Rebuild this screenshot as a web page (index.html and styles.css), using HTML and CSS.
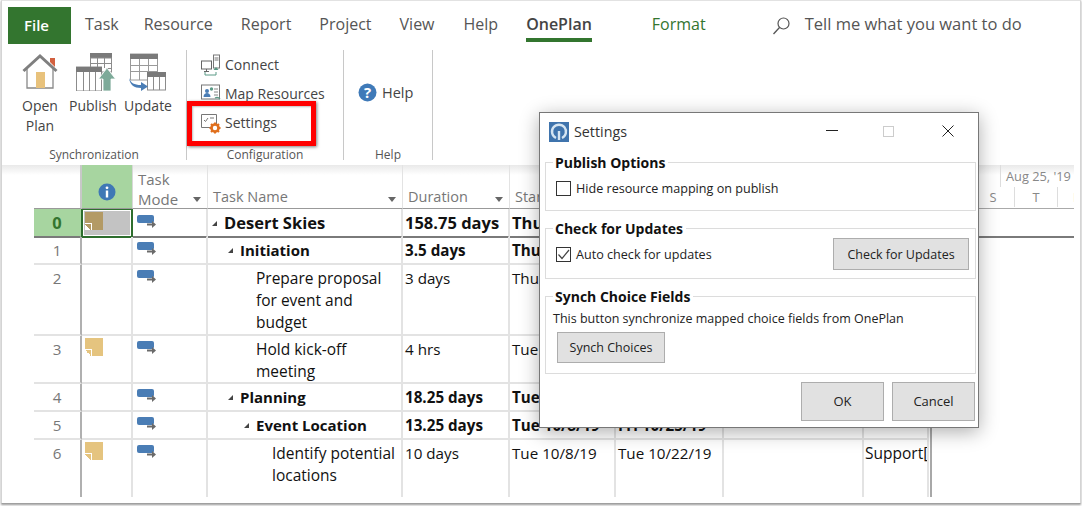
FILE: index.html
```html
<!DOCTYPE html>
<html lang="en">
<head>
<meta charset="utf-8">
<title>OnePlan Settings</title>
<link rel="stylesheet" href="styles.css">
</head>
<body>
<svg class="defs" width="0" height="0"><symbol id="mode" viewBox="0 0 20 14"><rect x="0" y="0" width="17" height="8" rx="2" fill="#4a7db5"/><path d="M10 9.500h6" stroke="#6a6a6a" stroke-width="2" fill="none"/><path d="M15 6 19 9.500 15 13z" fill="#6a6a6a"/></symbol></svg>
<div class="window">
  <nav class="tabs">
    <span class="tab file">File</span>
    <span class="tab t-task">Task</span>
    <span class="tab t-res">Resource</span>
    <span class="tab t-rep">Report</span>
    <span class="tab t-proj">Project</span>
    <span class="tab t-view">View</span>
    <span class="tab t-help">Help</span>
    <span class="tab t-one">OnePlan</span>
    <span class="tab t-format">Format</span>
    <span class="tell">
      <svg class="search" width="20" height="20" viewBox="0 0 20 20"><circle cx="11.500" cy="7.500" r="5.500" fill="none" stroke="#555" stroke-width="1.200"/><path d="M7.500 11.500 1.500 18" stroke="#555" stroke-width="1.300" fill="none"/></svg>
      Tell me what you want to do
    </span>
  </nav>
  <section class="ribbon">
    <div class="group g-sync">
      <div class="group-body big-row">
        <div class="big b-open">
          <svg width="36" height="36" viewBox="0 0 36 36"><path d="M28 5h5v9l-5-5z" fill="#d2603f"/><path d="M5 16v19h26V16" fill="#fff" stroke="#888" stroke-width="1.300"/><path d="M14 19h9v16h-9z" fill="#e8c27c"/><path d="M1.500 18 18 3l16.500 15" fill="none" stroke="#7f7f7f" stroke-width="3"/></svg>
          <span>Open<br>Plan</span>
        </div>
        <div class="big b-pub">
          <svg width="40" height="38" viewBox="0 0 40 38"><path d="M14 0h22v5H14z" fill="#7a7a7a"/><rect x="14.500" y="5" width="21" height="14" fill="#fff" stroke="#8c8c8c"/><path d="M21.500 5v10M28.500 5v10M14 10.500h22M30 15.500h6" stroke="#8c8c8c" fill="none"/><rect x=".5" y="14" width="25" height="24" fill="#fff" stroke="#8c8c8c"/><path d="M0 14h26v5H0z" fill="#7a7a7a"/><path d="M7.500 19v19M13.500 19v19M19.500 19v19" stroke="#8c8c8c"/><path d="M31 15 39.500 26H35V38H27V26H22.500z" fill="#7daa99" stroke="#fff" stroke-width=".8"/></svg>
          <span>Publish</span>
        </div>
        <div class="big b-upd">
          <svg width="38" height="38" viewBox="0 0 38 38"><rect x="1.500" y="1" width="27" height="26" fill="#fff" stroke="#9a9a9a"/><path d="M1 1h28v5H1z" fill="#7a7a7a"/><path d="M1 12.500h28M1 18.500h28M10.500 6v21M19.500 6v21" stroke="#9a9a9a"/><rect x="18.500" y="20" width="18" height="17" fill="#fff" stroke="#8c8c8c"/><path d="M18 19h19v5H18z" fill="#7a7a7a"/><path d="M24.500 24v13M30.500 24v13" stroke="#8c8c8c"/><path d="M0 25c2 5 5 7 12 7v-3l7 4.500-7 4.500v-3C5 35 1 32 0 25z" fill="#4a7db5"/></svg>
          <span>Update</span>
        </div>
      </div>
      <div class="group-label">Synchronization</div>
    </div>
    <div class="group g-conf">
      <div class="group-body small-col">
        <div class="small">
          <svg width="22" height="22" viewBox="0 0 22 22"><rect x="1.500" y="7" width="10" height="8" fill="#fff" stroke="#666"/><path d="M4 17.500h5M6.500 15v2.500" stroke="#666"/><rect x="13.500" y="1" width="6" height="13" fill="#fff" stroke="#777"/><path d="M14.500 4h4M14.500 6h4" stroke="#777"/><path d="M5 18v3h11v-3" fill="none" stroke="#5b9a86"/><path d="M16 13l-2.500 3h5z" fill="#5b9a86"/></svg>
          <span>Connect</span>
        </div>
        <div class="small">
          <svg width="22" height="22" viewBox="0 0 22 22"><rect x="1.500" y="2" width="18" height="14" fill="#fff" stroke="#777"/><circle cx="7" cy="8" r="2" fill="#4a7db5"/><path d="M3.500 14c0-3 2-4 3.500-4s3.500 1 3.500 4z" fill="#4a7db5"/><circle cx="11.500" cy="6" r="1.700" fill="#5b9a86"/><path d="M14 6h4M14 9h4M14 12h4" stroke="#888"/><path d="M15 15a4 4 0 0 1 5 1M20 19a4 4 0 0 1-5 1" stroke="#5b9a86" fill="none" stroke-width="1.300"/></svg>
          <span>Map Resources</span>
        </div>
        <div class="small">
          <svg width="22" height="22" viewBox="0 0 22 22"><path d="M1.500 2.500h15v13h-15z" fill="#fff" stroke="#777"/><path d="M4 8l1.500 1.500L8 6M10 6h4" stroke="#777" fill="none"/><circle cx="15" cy="16" r="3.500" fill="#fff" stroke="#e0701e" stroke-width="2.600"/><path d="M15 10.500v2M15 19.500v2M9.500 16h2M18.500 16h2M11 12l1.500 1.500M17.500 18.500 19 20M19 12l-1.500 1.500M12.500 18.500 11 20" stroke="#e0701e" stroke-width="2"/></svg>
          <span>Settings</span>
        </div>
      </div>
      <div class="group-label">Configuration</div>
    </div>
    <div class="group g-help">
      <div class="group-body help-body">
        <svg width="19" height="19" viewBox="0 0 19 19"><circle cx="9.500" cy="9.500" r="9" fill="#3f7ab8"/><text x="9.500" y="14.500" text-anchor="middle" class="qmark">?</text></svg>
        <span>Help</span>
      </div>
      <div class="group-label">Help</div>
    </div>
  </section>
  <section class="sheet">
    <div class="row head">
      <div class="c corner"></div>
      <div class="c info"><svg width="18" height="18" viewBox="0 0 18 18"><circle cx="9" cy="9" r="8.500" fill="#3f78b5"/><path d="M7.800 7.500h2.400v7H7.800z" fill="#fff"/><circle cx="9" cy="4.800" r="1.400" fill="#fff"/></svg></div>
      <div class="c h-mode"><span>Task<br>Mode</span><i class="arrow"></i></div>
      <div class="c"><span>Task Name</span><i class="arrow"></i></div>
      <div class="c"><span>Duration</span><i class="arrow"></i></div>
      <div class="c"><span>Start</span><i class="arrow"></i></div>
      <div class="c"></div>
      <div class="c"></div>
      <div class="c"></div>
      <div class="c gutter"></div>
      <div class="gantt-head">
        <div class="week">Aug 25, '19</div>
        <div class="days"><span>S</span><span>T</span><span class="cut">F</span></div>
      </div>
    </div>
    <div class="row r0 summary">
      <div class="c num sel-num">0</div>
      <div class="c ind sel"><b class="note dark"></b></div>
      <div class="c mode"><svg class="m"><use href="#mode"/></svg></div>
      <div class="c name l1"><i class="tri"></i>Desert Skies</div>
      <div class="c">158.75 days</div>
      <div class="c">Thu</div>
      <div class="c"></div>
      <div class="c"></div>
      <div class="c"></div>
      <div class="c gutter"></div>
      <div class="c gantt-cell"></div>
    </div>
    <div class="row r1 summary">
      <div class="c num">1</div>
      <div class="c ind"></div>
      <div class="c mode"><svg class="m"><use href="#mode"/></svg></div>
      <div class="c name l2"><i class="tri"></i>Initiation</div>
      <div class="c">3.5 days</div>
      <div class="c">Thu</div>
      <div class="c"></div>
      <div class="c"></div>
      <div class="c"></div>
      <div class="c gutter"></div>
    </div>
    <div class="row r2">
      <div class="c num">2</div>
      <div class="c ind"></div>
      <div class="c mode"><svg class="m"><use href="#mode"/></svg></div>
      <div class="c name l3">Prepare proposal<br>for event and<br>budget</div>
      <div class="c">3 days</div>
      <div class="c">Thu</div>
      <div class="c"></div>
      <div class="c"></div>
      <div class="c"></div>
      <div class="c gutter"></div>
    </div>
    <div class="row r3">
      <div class="c num">3</div>
      <div class="c ind"><b class="note"></b></div>
      <div class="c mode"><svg class="m"><use href="#mode"/></svg></div>
      <div class="c name l3">Hold kick-off<br>meeting</div>
      <div class="c">4 hrs</div>
      <div class="c">Tue</div>
      <div class="c"></div>
      <div class="c"></div>
      <div class="c"></div>
      <div class="c gutter"></div>
    </div>
    <div class="row r1 summary">
      <div class="c num">4</div>
      <div class="c ind"></div>
      <div class="c mode"><svg class="m"><use href="#mode"/></svg></div>
      <div class="c name l2"><i class="tri"></i>Planning</div>
      <div class="c">18.25 days</div>
      <div class="c">Tue</div>
      <div class="c"></div>
      <div class="c"></div>
      <div class="c"></div>
      <div class="c gutter"></div>
    </div>
    <div class="row r1 summary">
      <div class="c num">5</div>
      <div class="c ind"></div>
      <div class="c mode"><svg class="m"><use href="#mode"/></svg></div>
      <div class="c name l3"><i class="tri"></i>Event Location</div>
      <div class="c">13.25 days</div>
      <div class="c">Tue 10/8/19</div>
      <div class="c">Fri 10/25/19</div>
      <div class="c"></div>
      <div class="c"></div>
      <div class="c gutter"></div>
    </div>
    <div class="row r6">
      <div class="c num">6</div>
      <div class="c ind"><b class="note"></b></div>
      <div class="c mode"><svg class="m"><use href="#mode"/></svg></div>
      <div class="c name l4">Identify potential<br>locations</div>
      <div class="c">10 days</div>
      <div class="c">Tue 10/8/19</div>
      <div class="c">Tue 10/22/19</div>
      <div class="c"></div>
      <div class="c res">Support[</div>
      <div class="c gutter"></div>
    </div>
  </section>
</div>
<div class="highlight"></div>
<div class="dialog">
  <header class="dlg-title">
    <svg width="20" height="20" viewBox="0 0 20 20"><rect width="20" height="20" fill="#3f74ad"/><path d="M7 16a7 7 0 1 1 6 0" fill="none" stroke="#d5e5f2" stroke-width="2.400"/><path d="M10 9v9" stroke="#d5e5f2" stroke-width="2.400"/></svg>
    <span class="dlg-name">Settings</span>
    <span class="ctl min"></span>
    <span class="ctl max"></span>
    <svg class="close" width="12" height="12" viewBox="0 0 12 12"><path d="M.5.500l11 11M11.500.500l-11 11" stroke="#222" fill="none"/></svg>
  </header>
  <fieldset class="box b1">
    <legend>Publish Options</legend>
    <label class="check"><i class="cb"></i>Hide resource mapping on publish</label>
  </fieldset>
  <fieldset class="box b2">
    <legend>Check for Updates</legend>
    <label class="check"><i class="cb"><svg width="13" height="13" viewBox="0 0 13 13"><path d="M1.500 6.500 5 10.500 12 2" fill="none" stroke="#444" stroke-width="1.200"/></svg></i>Auto check for updates</label>
    <button class="btn b-check">Check for Updates</button>
  </fieldset>
  <fieldset class="box b3">
    <legend>Synch Choice Fields</legend>
    <p class="desc">This button synchronize mapped choice fields from OnePlan</p>
    <button class="btn b-synch">Synch Choices</button>
  </fieldset>
  <footer class="dlg-foot">
    <button class="btn b-foot">OK</button>
    <button class="btn b-foot">Cancel</button>
  </footer>
</div>
</body>
</html>
```
FILE: styles.css
```css
* { box-sizing: border-box; }
html, body { margin: 0; padding: 0; }
body {
  width: 1082px; height: 506px; overflow: hidden; background: #fff;
  font-family: "Open Sans", "Noto Sans", sans-serif; color: #222;
  position: relative;
}
.defs { position: absolute; }
.window {
  width: 1080px; height: 504px; margin-left: 1px;
  border: 1px solid #d4d4d4; border-bottom: 1px solid #a0a0a0; border-top-color: #e2e2e2;
  box-shadow: 0 1px 2px #999;
  background: #fff; overflow: hidden;
}
.tabs { display: flex; align-items: stretch; height: 47px; padding: 6px 0 0 6px; font-size: 16px; color: #555; }
.tab { display: block; padding-top: 5px; line-height: 24px; height: 31px; white-space: nowrap; }
.file { width: 63px; height: 37px; background: #33752f; color: #fff; text-align: center; padding: 6px 6px 0 0; font-weight: 600; font-size: 15px; }
.t-task { margin-left: 14px; }
.t-res { margin-left: 25px; }
.t-rep { margin-left: 28px; }
.t-proj { margin-left: 28px; }
.t-view { margin-left: 28px; }
.t-help { margin-left: 29px; }
.t-one { margin-left: 28px; font-weight: 600; color: #444; height: 35px; border-bottom: 4px solid #33752f; }
.t-format { margin-left: 60px; color: #33752f; }
.tell { margin-left: 66px; padding-top: 5px; line-height: 24px; display: flex; gap: 13px; color: #555; font-size: 16.500px; height: 31px; white-space: nowrap; }
.search { margin-top: 4px; }
.ribbon { display: flex; height: 117px; color: #444; font-size: 14px; }
.group { display: flex; flex-direction: column; border-right: 1px solid #c8c8c8; height: 110px; margin-top: 2px; }
.group-body { height: 96px; flex: none; }
.group-label { font-size: 12px; text-align: center; line-height: 18px; color: #555; flex: none; }
.g-sync { width: 185px; }
.g-conf { width: 157px; }
.g-help { width: 89px; }
.big-row { display: flex; padding: 3px 0 0 18px; }
.big { display: flex; flex-direction: column; align-items: center; text-align: center; line-height: 20px; font-size: 14px; }
.big svg { margin-bottom: 7px; flex: none; }
.b-pub svg, .b-upd svg { margin-bottom: 5px; }
.b-pub svg { margin-left: 6px; }
.b-open { width: 40px; }
.b-pub { width: 50px; margin-left: 8px; }
.b-upd { width: 50px; margin-left: 5px; }
.small-col { display: flex; flex-direction: column; padding: 0 0 0 13px; }
.small { display: flex; align-items: center; gap: 3px; height: 29px; font-size: 14px; white-space: nowrap; }
.help-body { display: flex; align-items: center; gap: 5px; padding: 0 0 0 14px; font-size: 14.500px; height: 84px; margin-bottom: 12px; }
.qmark { font: 700 15px "Open Sans", sans-serif; fill: #fff; }
.sheet { position: relative; background: linear-gradient(#e9e9e9 0, #fff 10px) no-repeat 0 0 / 1072px 12px; }
.row {
  display: grid;
  grid-template-columns: 48px 51px 75px 195px 107px 106px 108px 140px 65px 3px 142px;
  padding-left: 32px;
  font-size: 15.200px; color: #111;
}
.row .c { border-right: 2px solid #e3e3e3; border-bottom: 2px solid #e3e3e3; padding: 2px 0 0 2px; line-height: 22px; min-width: 0; overflow: hidden; white-space: nowrap; }
.row .gutter { border-right: 2px solid #a8a8a8; border-left: 0; border-bottom: 0; padding: 0; overflow: visible; }
.head { height: 44px; font-size: 14.500px; color: #777; position: relative; }
.head .c { border-bottom: 1px solid #999; position: relative; padding: 0 0 1px 5px; display: flex; align-items: flex-end; line-height: 20px; border-right-width: 1px; }
.head .h-mode { padding: 5px 0 0 5px; align-items: flex-start; font-size: 15px; line-height: 19.500px; }
.head .corner { border-right: 2px solid #c8c8c8; }
.head .info { background: #a7d5a0; padding: 0 0 7px; justify-content: center; border-right: 1px solid #d8d8d8; }
.arrow { position: absolute; right: 6px; bottom: 6px; border: 4.500px solid transparent; border-top: 5px solid #666; border-bottom: 0; }
.head .gutter { border-bottom: 1px solid #999; padding: 0; }
.gantt-head { height: 44px; width: 142px; font-size: 12.800px; color: #888; border-bottom: 1px solid #aaa; overflow: hidden; }
.week { margin-left: 68px; padding: 1px 0 0 5px; height: 22px; line-height: 20px; border-left: 1px solid #ddd; white-space: nowrap; }
.days { display: flex; padding-left: 40px; line-height: 20px; }
.days span { width: 43px; flex: none; text-align: center; border-right: 1px solid #ddd; height: 20px; }
.days .cut { border: 0; text-align: left; padding-left: 15px; }
.row .gantt-cell { border-right: 0; }
.row .num { text-align: center; color: #777; font-weight: 400; padding: 2px 0 0; border-right: 2px solid #b0b0b0; }
.row .mode { padding: 5px 0 0 4px; }
.r0 .c.mode { padding-top: 6px; }
.m { display: block; width: 20px; height: 14px; }
.note { display: block; width: 18px; height: 18px; background: #e5c47f; position: relative; margin: 0 0 0 1px; }
.note::after { content: ""; position: absolute; left: 0; bottom: 0; width: 6px; height: 6px; background: linear-gradient(45deg, #fff 50%, transparent 50%); border-top: 1px solid #fff; border-right: 1px solid #fff; }
.note.dark { background: #b39a65; margin: 0; }
.summary { font-weight: 700; }
.r0 { height: 28px; font-size: 16.500px; }
.r0 .c { border-bottom: 2px solid #7a7a7a; padding-top: 3px; }
.r1 { height: 28px; }
.r2 { height: 71px; }
.r3 { height: 48px; }
.r6 { height: 57px; }
.r6 .c { border-bottom: 0; }
.row .sel-num { background: #a7d5a0; color: #33752f; font-weight: 700; border-right-color: #a7d5a0; }
.row .sel { background: #c3c3c3; border: 2px solid #2e6e2e; box-shadow: inset 0 0 0 1px #fff; padding: 2px 0 0 2px; margin: -1px 0 0 -1px; height: 30px; }
.row .name { white-space: nowrap; position: relative; font-size: 15.500px; }
.summary .name { font-size: 15px; }
.r0.summary .name { font-size: 16.500px; }
.row .l1 { padding-left: 16px; }
.row .l2 { padding-left: 32px; }
.row .l3 { padding-left: 48px; }
.row .l4 { padding-left: 64px; }
.row .res { padding-left: 1px; font-size: 15.500px; }
.tri { position: absolute; margin-left: -12px; margin-top: 9px; border-style: solid; border-width: 0 0 5px 5px; border-color: transparent transparent #444 transparent; }
.highlight { position: absolute; left: 187px; top: 101px; width: 129px; height: 45px; border: 5px solid #f00; box-shadow: 1px 1px 3px rgba(0,0,0,.5), inset 1px 1px 2px rgba(0,0,0,.25); pointer-events: none; }
.dialog {
  position: absolute; left: 539px; top: 112px; width: 440px; height: 316px;
  background: #fff; border: 1px solid #777;
  box-shadow: 0 4px 18px rgba(0,0,0,.32);
  font-size: 12.600px; color: #222;
  padding: 0 2px 0 5px;
}
.dlg-title { display: flex; align-items: center; height: 36px; padding: 1px 0 0 4px; position: relative; }
.dlg-name { font-size: 14.300px; margin-left: 5px; color: #333; }
.ctl { position: absolute; }
.min { left: 281px; top: 17px; width: 12px; border-top: 1px solid #222; }
.max { left: 338px; top: 13px; width: 11px; height: 11px; border: 1px solid #ccc; }
.close { position: absolute; left: 397px; top: 12px; }
.box { position: relative; border: 1px solid #dcdcdc; margin: 0; padding: 0; min-width: 0; }
.box legend { position: absolute; top: -8px; left: 0; background: #fff; font-weight: 700; font-size: 14px; line-height: 16px; padding: 0 3px 0 2px; margin-left: 7px; color: #111; white-space: nowrap; }
.b1 { height: 49px; margin-top: 13px; }
.b2 { height: 51px; margin-top: 17px; }
.b3 { height: 78px; margin-top: 17px; }
.check { display: flex; align-items: center; gap: 5px; position: absolute; left: 10px; top: 17px; font-size: 12.600px; white-space: nowrap; }
.cb { width: 15px; height: 15px; border: 1px solid #333; display: block; line-height: 0; }
.btn { font: 12.500px "Open Sans", sans-serif; background: #e1e1e1; border: 1px solid #adadad; color: #222; padding: 0; }
.b-check { position: absolute; left: 287px; top: 9px; width: 136px; height: 32px; }
.desc { position: absolute; left: 7px; top: 14px; margin: 0; font-size: 12.500px; line-height: 16px; white-space: nowrap; }
.b-synch { position: absolute; left: 11px; top: 35px; width: 108px; height: 31px; }
.dlg-foot { display: flex; justify-content: flex-end; gap: 8px; margin: 8px 1px 0 0; }
.b-foot { width: 83px; height: 39px; font-size: 13px; padding-bottom: 2px; }
```
